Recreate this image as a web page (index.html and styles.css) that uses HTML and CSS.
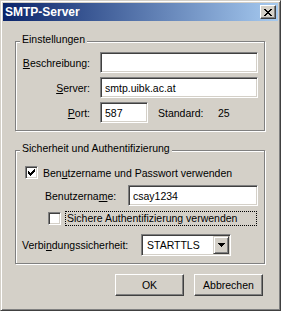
FILE: index.html
```html
<!DOCTYPE html>
<html lang="de">
<head>
    <meta charset="UTF-8">
    <meta name="viewport" content="width=device-width, initial-scale=1.0">
    <title>SMTP-Server</title>
    <link rel="stylesheet" href="styles.css">
</head>
<body>
    <div class="window">
        <div class="titlebar">
            <span class="title">SMTP-Server</span>
            <span class="close-btn">
                <svg width="10" height="9" viewBox="0 0 10 9" shape-rendering="crispEdges">
                    <path d="M1 1h2v1h-2zM7 1h2v1h-2zM2 2h2v1h-2zM6 2h2v1h-2zM3 3h4v1h-4zM4 4h2v1h-2zM3 5h4v1h-4zM2 6h2v1h-2zM6 6h2v1h-2zM1 7h2v1h-2zM7 7h2v1h-2z" fill="#000"/>
                </svg>
            </span>
        </div>

        <fieldset class="group group-server">
            <legend>Einstellungen</legend>
            <div class="row">
                <label class="label-right" for="desc"><u>B</u>eschreibung:</label>
                <input class="field field-wide" id="desc" type="text" value="">
            </div>
            <div class="row row-next">
                <label class="label-right" for="server"><u>S</u>erver:</label>
                <input class="field field-wide" id="server" type="text" value="smtp.uibk.ac.at">
            </div>
            <div class="row row-next">
                <label class="label-right" for="port"><u>P</u>ort:</label>
                <input class="field field-port" id="port" type="text" value="587">
                <span class="default-label">Standard:</span>
                <span>25</span>
            </div>
        </fieldset>

        <fieldset class="group group-security">
            <legend>Sicherheit und Authentifizierung</legend>
            <div class="row check-row">
                <span class="checkbox">
                    <svg width="9" height="9" viewBox="0 0 9 9" shape-rendering="crispEdges">
                        <path d="M7 1h1v1h-1zM6 2h2v1h-2zM1 3h1v1h-1zM5 3h3v1h-3zM1 4h2v1h-2zM4 4h3v1h-3zM1 5h5v1h-5zM2 6h3v1h-3zM3 7h1v1h-1z" fill="#000"/>
                    </svg>
                </span>
                <span class="check-text">Ben<u>u</u>tzername und Passwort verwenden</span>
            </div>
            <div class="row user-row">
                <label class="user-label" for="user">Benutzerna<u>m</u>e:</label>
                <input class="field field-user" id="user" type="text" value="csay1234">
            </div>
            <div class="row secure-row">
                <span class="checkbox"></span>
                <span class="focus-text">Sichere Authentifizierung verwenden</span>
            </div>
            <div class="row conn-row">
                <span class="conn-label">Verbi<u>n</u>dungssicherheit:</span>
                <div class="select">
                    <span class="select-value">STARTTLS</span>
                    <span class="drop-btn">
                        <svg width="7" height="4" viewBox="0 0 7 4" shape-rendering="crispEdges">
                            <path d="M0 0h7v1h-7zM1 1h5v1h-5zM2 2h3v1h-3zM3 3h1v1h-1z" fill="#000"/>
                        </svg>
                    </span>
                </div>
            </div>
        </fieldset>

        <div class="buttons">
            <button class="btn">OK</button>
            <button class="btn">Abbrechen</button>
        </div>
    </div>
</body>
</html>
```

FILE: styles.css
```css
* {
    box-sizing: border-box;
}

body {
    margin: 0;
    background: #d4d0c8;
    font-family: "Liberation Sans", Arial, sans-serif;
    font-size: 10.5px;
    color: #000;
}

.window {
    width: 281px;
    height: 311px;
    padding: 2px;
    display: flex;
    flex-direction: column;
    background: #d4d0c8;
    border: 1px solid;
    border-color: #d4d0c8 #404040 #404040 #d4d0c8;
    box-shadow: inset 1px 1px #fff, inset -1px -1px #808080;
}

/* Titelleiste */
.titlebar {
    height: 18px;
    padding: 0 2px;
    display: flex;
    align-items: center;
    justify-content: space-between;
    background: linear-gradient(to right, #0a246a, #a6caf0);
}

.title {
    color: #fff;
    font-weight: bold;
    font-size: 12px;
    line-height: 18px;
}

.close-btn {
    width: 16px;
    height: 14px;
    display: flex;
    align-items: center;
    justify-content: center;
    background: #d4d0c8;
    border: 1px solid;
    border-color: #fff #404040 #404040 #fff;
    box-shadow: inset -1px -1px #808080;
}

/* Gruppenrahmen */
.group {
    width: 250px;
    margin: 12px 0 0 12px;
    padding: 2px 0 7px 0;
    min-width: 0;
    border: 1px solid #808080;
    box-shadow: inset 1px 1px #fff, 1px 1px #fff;
}

.group legend {
    margin-left: 4px;
    padding: 0 2px 4px;
    line-height: 13px;
    background: #d4d0c8;
}

.group-security {
    margin-top: 11px;
    padding-top: 7px;
}

.row {
    display: flex;
    align-items: center;
}

.row-next {
    margin-top: 4px;
}

.label-right {
    width: 74px;
    margin-right: 10px;
    text-align: right;
}

/* Eingabefelder */
.field {
    height: 21px;
    padding: 0 4px;
    font-family: inherit;
    font-size: inherit;
    color: #000;
    background: #fff;
    border: 1px solid;
    border-color: #808080 #fff #fff #808080;
    box-shadow: inset 1px 1px #404040, inset -1px -1px #d4d0c8;
    outline: none;
}

.field-wide {
    width: 158px;
}

.field-port {
    width: 48px;
}

.default-label {
    width: 60px;
    margin-left: 10px;
}

.checkbox {
    width: 13px;
    height: 13px;
    flex-shrink: 0;
    display: flex;
    align-items: center;
    justify-content: center;
    background: #fff;
    border: 1px solid;
    border-color: #808080 #fff #fff #808080;
    box-shadow: inset 1px 1px #404040, inset -1px -1px #d4d0c8;
}

.check-row {
    height: 13px;
    padding-left: 9px;
}

.check-text {
    margin-left: 5px;
}

.user-row {
    margin-top: 6px;
    padding-left: 29px;
}

.user-label {
    width: 83px;
}

.field-user {
    width: 130px;
}

.secure-row {
    height: 15px;
    margin-top: 5px;
    padding-left: 32px;
}

.focus-text {
    width: 192px;
    height: 15px;
    margin-left: 4px;
    padding-left: 1px;
    line-height: 13px;
    border: 1px dotted #000;
}

.conn-row {
    margin-top: 8px;
    padding-left: 6px;
}

.conn-label {
    width: 119px;
}

/* Auswahlliste */
.select {
    width: 90px;
    height: 22px;
    padding: 2px 1px 2px 5px;
    display: flex;
    align-items: center;
    justify-content: space-between;
    background: #fff;
    border: 1px solid;
    border-color: #808080 #fff #fff #808080;
    box-shadow: inset 1px 1px #404040, inset -1px -1px #d4d0c8;
}

.drop-btn {
    width: 16px;
    height: 18px;
    display: flex;
    align-items: center;
    justify-content: center;
    background: #d4d0c8;
    border: 1px solid;
    border-color: #d4d0c8 #404040 #404040 #d4d0c8;
    box-shadow: inset 1px 1px #fff, inset -1px -1px #808080;
}

/* Schaltflaechen */
.buttons {
    margin-top: 10px;
    padding-right: 15px;
    display: flex;
    justify-content: flex-end;
    gap: 10px;
}

.btn {
    width: 69px;
    height: 22px;
    padding: 0;
    font-family: inherit;
    font-size: inherit;
    color: #000;
    background: #d4d0c8;
    border: 1px solid;
    border-color: #fff #404040 #404040 #fff;
    box-shadow: inset -1px -1px #808080;
}
```
